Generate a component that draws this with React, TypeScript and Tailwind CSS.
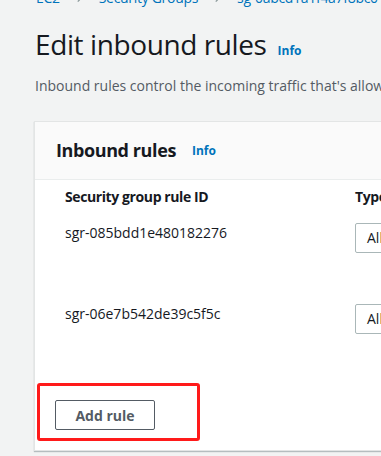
import { ChevronRight } from "lucide-react";

const rules = [
  { id: "sgr-085bdd1e480182276", type: "All traffic" },
  { id: "sgr-06e7b542de39c5f5c", type: "All traffic" },
];

function Info() {
  return <span className="text-[12px] font-bold text-[#0073bb]">Info</span>;
}

export default function App() {
  return (
    <div className="relative h-[456px] w-[381px] overflow-hidden bg-[#f2f3f3] font-['Open_Sans',sans-serif] text-[#16191f]">
      <nav className="-mt-[12px] flex h-[20px] w-[900px] flex-nowrap items-center gap-[14px] whitespace-nowrap pl-[36px] text-[14px] leading-[20px] tracking-[-0.3px] text-[#0073bb]">
        <span>EC2</span>
        <ChevronRight size={11} strokeWidth={2.5} className="shrink-0 text-[#879596]" />
        <span>Security Groups</span>
        <ChevronRight size={11} strokeWidth={2.5} className="shrink-0 text-[#879596]" />
        <span>sg-0abcd1a1f4a7f8bc0 - launch-wizard-1</span>
      </nav>

      <div className="mt-[18px] flex items-baseline gap-[11px] pl-[35px]">
        <h1 className="whitespace-nowrap text-[28px] font-normal leading-[36px] tracking-[-0.4px]">Edit inbound rules</h1>
        <Info />
      </div>
      <p className="mt-[14px] whitespace-nowrap pl-[35px] text-[14px] leading-[20px] text-[#545b64]">
        Inbound rules control the incoming traffic that's allowed to reach the instance.
      </p>

      <section className="ml-[34px] mt-[25px] w-[900px] border border-[#e3e5e5] bg-white shadow-[0_1px_1px_rgba(0,28,36,0.25)]">
        <header className="flex h-[58px] items-center gap-[16px] border-b border-[#eaeded] bg-[#fafafa] pl-[21px]">
          <h2 className="text-[18px] font-bold tracking-[-0.4px]">Inbound rules</h2>
          <Info />
        </header>

        <div className="pl-[30px]">
          <div className="flex h-[32px] items-center text-[14px] font-bold tracking-[-0.4px]">
            <div className="w-[290px]">Security group rule ID</div>
            <div>Type</div>
          </div>
          {rules.map((rule) => (
            <div key={rule.id} className="flex h-[81px] items-start pt-[11px] text-[14px] leading-[20px]">
              <div className="w-[290px]">{rule.id}</div>
              <div className="flex h-[30px] w-[200px] items-center rounded-[2px] border border-[#aab7b8] px-[11px]">
                {rule.type}
              </div>
            </div>
          ))}
          <div className="pb-[20px] pt-[26px]">
            <button
              type="button"
              className="-ml-[10px] flex h-[30px] w-[100px] items-center justify-center rounded-[2px] border border-[#545b64] text-[14px] font-bold text-[#545b64]"
            >
              Add rule
            </button>
          </div>
        </div>
      </section>

      <div className="absolute left-[37px] top-[383px] h-[58px] w-[163px] rounded-[3px] border-[3px] border-[#ff1a1a]" />
    </div>
  );
}
